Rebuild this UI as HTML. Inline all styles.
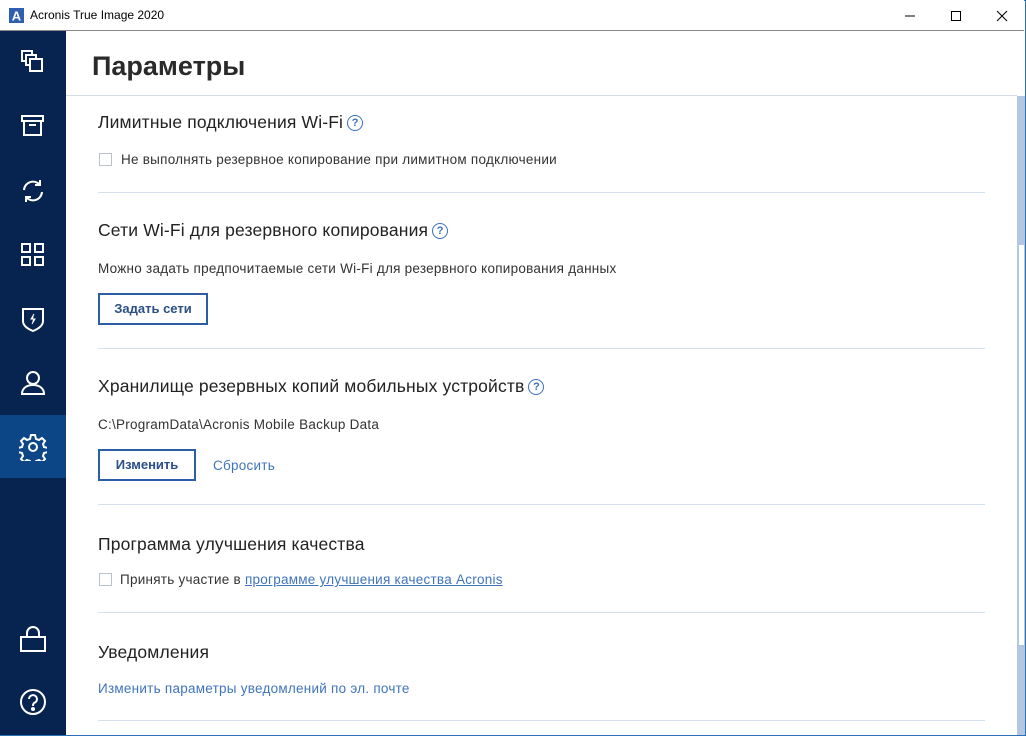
<!DOCTYPE html>
<html><head><meta charset="utf-8"><style>
*{margin:0;padding:0;box-sizing:border-box}
body{width:1026px;height:736px;overflow:hidden;background:#fff;font-family:"Liberation Sans","DejaVu Sans",sans-serif;position:relative}
.win{position:absolute;left:0;top:0;width:1026px;height:736px;border:1px solid #2a72b8}
.tb{position:absolute;left:0;top:0;width:1024px;height:31px;border-bottom:1px solid #8a8a8a;background:#fff}
.tb .t{position:absolute;left:30px;top:8px;font-size:12px;color:#000}
.side{position:absolute;left:0;top:31px;width:66px;height:704px;background:#072350}
.sel{position:absolute;left:0;top:384px;width:66px;height:63px;background:#0d4686}
.ico{position:absolute;left:19px;width:28px;height:28px}
.main{position:absolute;left:66px;top:31px;width:959px;height:704px;background:#fff}
.h1{position:absolute;left:92px;top:51px;font-size:27px;font-weight:bold;color:#2a2a2a}
.hl{position:absolute;left:66px;top:95px;width:951px;height:1px;background:#d2dce8}
.sb{position:absolute;left:1017px;top:96px;width:8px;height:639px;background:#b4c6e0}
.th{position:absolute;left:1018px;top:245px;width:6px;height:400px;background:#fff;border-left:1px solid #b4c6e0}
.s{position:absolute;left:98px;font-size:17.5px;letter-spacing:0.15px;color:#222}
.x{position:absolute;font-size:13.5px;letter-spacing:0.25px;color:#333}
.dv{position:absolute;left:98px;width:887px;height:1px;background:#d3e0ee}
.cb{position:absolute;left:99px;width:13px;height:13px;border:1px solid #b8c2cc;background:#fff}
.btn{position:absolute;left:98px;height:32px;border:2px solid #2b5ea4;color:#2b4f86;font-size:13px;font-weight:bold;text-align:center;line-height:28px;background:#fff}
.q{display:inline-block;width:16px;height:16px;border:1.5px solid #3b6fbf;border-radius:50%;color:#3b6fbf;font-size:11px;text-align:center;line-height:14px;font-weight:bold;vertical-align:2px;margin-left:4px;letter-spacing:0}
.lk{color:#3f74bd}
</style></head><body>
<div class="win"></div>
<div class="tb">
<svg style="position:absolute;left:9px;top:8px" width="15" height="15"><rect width="15" height="15" fill="#2f5fb0"/><text x="7.5" y="12.5" font-size="13" font-weight="bold" fill="#fff" text-anchor="middle" font-family="Liberation Sans">A</text></svg>
<div class="t">Acronis True Image 2020</div>
<svg style="position:absolute;left:900px;top:8px" width="120" height="16"><line x1="5" y1="8" x2="15" y2="8" stroke="#000"/><rect x="51.5" y="3.5" width="9" height="9" fill="none" stroke="#000"/><path d="M97 3L107 13M107 3L97 13" stroke="#000"/></svg>
</div>
<div class="side">
<div class="sel"></div>
<svg class="ico" style="top:17px" viewBox="0 0 28 28" fill="none" stroke="#fff" stroke-width="2"><rect x="3" y="3" width="10" height="10"/><rect x="7" y="7" width="10" height="10" fill="#072350"/><rect x="11" y="11" width="12" height="12" fill="#072350"/></svg>
<svg class="ico" style="top:82px" viewBox="0 0 28 28" fill="none" stroke="#fff" stroke-width="2"><rect x="3" y="3" width="21" height="5"/><rect x="5" y="8" width="17" height="14"/><line x1="10" y1="12" x2="17" y2="12"/></svg>
<svg class="ico" style="top:146px" viewBox="0 0 28 28" fill="none" stroke="#fff" stroke-width="2"><path d="M5 13a9 9 0 0 1 16-5M23 15a9 9 0 0 1-16 5"/><path d="M21 3v5h-5M7 25v-5h5"/></svg>
<svg class="ico" style="top:210px" viewBox="0 0 28 28" fill="none" stroke="#fff" stroke-width="2"><rect x="3" y="3" width="8" height="8"/><rect x="16" y="3" width="8" height="8"/><rect x="3" y="16" width="8" height="8"/><rect x="16" y="16" width="8" height="8"/></svg>
<svg class="ico" style="top:274px" viewBox="0 0 28 28" fill="none" stroke="#fff" stroke-width="2"><path d="M4 4h20v12c0 5-5 8-10 10C9 24 4 21 4 16z"/><path d="M15 9l-3 5h4l-3 5" fill="#fff" stroke-width="1"/></svg>
<svg class="ico" style="top:338px" viewBox="0 0 28 28" fill="none" stroke="#fff" stroke-width="2"><circle cx="14" cy="9" r="6"/><path d="M3 25c0-6 5-9 11-9s11 3 11 9z"/></svg>
<svg class="ico" style="top:402px" viewBox="0 0 28 28" fill="none" stroke="#fff" stroke-width="2"><circle cx="14" cy="14" r="4"/><path d="M12 2h4l1 4 3 1 3-2 3 3-2 3 1 3 4 1v4l-4 1-1 3 2 3-3 3-3-2-3 1-1 4h-4l-1-4-3-1-3 2-3-3 2-3-1-3-4-1v-4l4-1 1-3-2-3 3-3 3 2 3-1z"/></svg>
<svg class="ico" style="top:595px" viewBox="0 0 28 28" fill="none" stroke="#fff" stroke-width="2"><rect x="2" y="11" width="24" height="14"/><path d="M8 11V7a6 6 0 0 1 12 0v4"/></svg>
<svg class="ico" style="top:657px" viewBox="0 0 28 28" fill="none" stroke="#fff" stroke-width="2"><circle cx="14" cy="14" r="12"/><path d="M10 11a4 4 0 1 1 5 4c-1 1-1 2-1 3"/><circle cx="14" cy="21" r="1" fill="#fff"/></svg>
</div>
<div class="main"></div>
<div class="h1">Параметры</div>
<div class="hl"></div>
<div class="sb"></div><div class="th"></div>

<div class="s" style="top:112px">Лимитные подключения Wi-Fi<span class="q">?</span></div>
<div class="cb" style="top:153px"></div><div class="x" style="left:121px;top:152px">Не выполнять резервное копирование при лимитном подключении</div>
<div class="dv" style="top:192px"></div>

<div class="s" style="top:220px">Сети Wi-Fi для резервного копирования<span class="q">?</span></div>
<div class="x" style="left:98px;top:261px">Можно задать предпочитаемые сети Wi-Fi для резервного копирования данных</div>
<div class="btn" style="top:293px;width:110px">Задать сети</div>
<div class="dv" style="top:348px"></div>

<div class="s" style="top:376px">Хранилище резервных копий мобильных устройств<span class="q">?</span></div>
<div class="x" style="left:98px;top:417px">C:\ProgramData\Acronis Mobile Backup Data</div>
<div class="btn" style="top:449px;width:98px">Изменить</div>
<div class="x lk" style="left:213px;top:458px">Сбросить</div>
<div class="dv" style="top:504px"></div>

<div class="s" style="top:534px">Программа улучшения качества</div>
<div class="cb" style="top:573px"></div><div class="x" style="left:120px;top:572px">Принять участие в <span class="lk" style="text-decoration:underline">программе улучшения качества Acronis</span></div>
<div class="dv" style="top:612px"></div>

<div class="s" style="top:642px">Уведомления</div>
<div class="x lk" style="left:98px;top:681px">Изменить параметры уведомлений по эл. почте</div>
<div class="dv" style="top:720px"></div>
</body></html>
